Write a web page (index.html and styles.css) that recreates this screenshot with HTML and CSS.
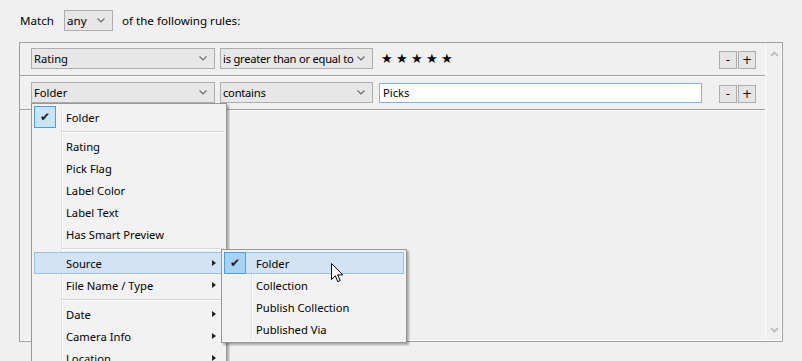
FILE: index.html
```html
<!DOCTYPE html>
<html lang="en">
<head>
    <meta charset="UTF-8">
    <title>Smart Collection Rules</title>
    <link rel="stylesheet" href="styles.css">
</head>
<body>
    <div class="match-line">
        <span class="match-label">Match</span>
        <div class="combo combo-any">
            <span>any</span>
            <svg class="chev" width="8" height="5" viewBox="0 0 8 5"><polyline points="0.5,0.5 4,4 7.5,0.5" fill="none" stroke="#6d6d6d" stroke-width="1.2"/></svg>
        </div>
        <span class="match-rest">of the following rules:</span>
    </div>

    <div class="rules-frame">
        <div class="rules">
            <!-- Rule 1 -->
            <div class="rule">
                <div class="combo combo-field">
                    <span>Rating</span>
                    <svg class="chev" width="8" height="5" viewBox="0 0 8 5"><polyline points="0.5,0.5 4,4 7.5,0.5" fill="none" stroke="#6d6d6d" stroke-width="1.2"/></svg>
                </div>
                <div class="combo combo-op">
                    <span>is greater than or equal to</span>
                    <svg class="chev" width="8" height="5" viewBox="0 0 8 5"><polyline points="0.5,0.5 4,4 7.5,0.5" fill="none" stroke="#6d6d6d" stroke-width="1.2"/></svg>
                </div>
                <div class="stars">
                    <span>★</span><span>★</span><span>★</span><span>★</span><span>★</span>
                </div>
                <div class="rule-btns">
                    <button class="mini-btn">-</button>
                    <button class="mini-btn">+</button>
                </div>
            </div>

            <!-- Rule 2 -->
            <div class="rule">
                <div class="combo combo-field">
                    <span>Folder</span>
                    <svg class="chev" width="8" height="5" viewBox="0 0 8 5"><polyline points="0.5,0.5 4,4 7.5,0.5" fill="none" stroke="#6d6d6d" stroke-width="1.2"/></svg>
                </div>
                <div class="combo combo-op">
                    <span>contains</span>
                    <svg class="chev" width="8" height="5" viewBox="0 0 8 5"><polyline points="0.5,0.5 4,4 7.5,0.5" fill="none" stroke="#6d6d6d" stroke-width="1.2"/></svg>
                </div>
                <div class="text-input">Picks</div>
                <div class="rule-btns">
                    <button class="mini-btn">-</button>
                    <button class="mini-btn">+</button>
                </div>
            </div>
        </div>

        <div class="scrollbar">
            <svg width="9" height="6" viewBox="0 0 9 6"><polyline points="1,5 4.5,1.5 8,5" fill="none" stroke="#c3c3c3" stroke-width="2"/></svg>
            <svg width="9" height="6" viewBox="0 0 9 6"><polyline points="1,1 4.5,4.5 8,1" fill="none" stroke="#c3c3c3" stroke-width="2"/></svg>
        </div>
    </div>

    <!-- Field popup menu (open over rule 2) -->
    <div class="menu menu-fields">
        <div class="menu-item checked"><span class="check">✔</span><span class="label">Folder</span></div>
        <div class="menu-sep"></div>
        <div class="menu-item"><span class="check"></span><span class="label">Rating</span></div>
        <div class="menu-item"><span class="check"></span><span class="label">Pick Flag</span></div>
        <div class="menu-item"><span class="check"></span><span class="label">Label Color</span></div>
        <div class="menu-item"><span class="check"></span><span class="label">Label Text</span></div>
        <div class="menu-item"><span class="check"></span><span class="label">Has Smart Preview</span></div>
        <div class="menu-sep"></div>
        <div class="menu-item hot"><span class="check"></span><span class="label">Source</span><span class="sub-arrow"></span></div>
        <div class="menu-item"><span class="check"></span><span class="label">File Name / Type</span><span class="sub-arrow"></span></div>
        <div class="menu-sep"></div>
        <div class="menu-item"><span class="check"></span><span class="label">Date</span><span class="sub-arrow"></span></div>
        <div class="menu-item"><span class="check"></span><span class="label">Camera Info</span><span class="sub-arrow"></span></div>
        <div class="menu-item"><span class="check"></span><span class="label">Location</span><span class="sub-arrow"></span></div>
    </div>

    <!-- Source submenu -->
    <div class="menu menu-source">
        <div class="menu-item hot checked"><span class="check">✔</span><span class="label">Folder</span></div>
        <div class="menu-item"><span class="check"></span><span class="label">Collection</span></div>
        <div class="menu-item"><span class="check"></span><span class="label">Publish Collection</span></div>
        <div class="menu-item"><span class="check"></span><span class="label">Published Via</span></div>
    </div>

    <svg class="cursor" width="13" height="20" viewBox="0 0 13 20">
        <path d="M0.5,0.5 L0.5,16.5 L4.3,12.8 L6.8,18.6 L9.2,17.6 L6.7,11.9 L11.8,11.9 Z" fill="#fff" stroke="#000" stroke-width="1" stroke-linejoin="miter"/>
    </svg>
</body>
</html>
```

FILE: styles.css
```css
body {
  margin: 0;
  padding: 0;
  width: 802px;
  height: 361px;
  overflow: hidden;
  background: #f0f0f0;
  font-family: "Noto Sans", "Open Sans", sans-serif;
  font-size: 11.2px;
  color: #000;
  position: relative;
}

/* Top line: Match [any] of the following rules */
.match-line {
  display: flex;
  align-items: center;
  padding: 10px 0 0 20px;
  height: 21px;
  font-size: 11.6px;
}
.match-label {
  width: 44px;
}
.match-rest {
  margin-left: 9px;
}

/* Combo boxes */
.combo {
  box-sizing: border-box;
  height: 21px;
  border: 1px solid #adadad;
  background: #e7e7e7;
  display: flex;
  align-items: center;
  justify-content: space-between;
  padding: 0 7px 0 2px;
  white-space: nowrap;
}
.combo .chev {
  flex: none;
}
.combo-any {
  width: 49px;
}
.combo-field {
  width: 184px;
}
.combo-op {
  width: 153px;
  margin-left: 5px;
  letter-spacing: -0.25px;
}

/* Frame holding the rules */
.rules-frame {
  box-sizing: border-box;
  margin: 11px 0 0 19px;
  width: 764px;
  height: 300px;
  border: 1px solid #a0a0a0;
  box-shadow: inset -1px -1px 0 #fff;
  display: flex;
}
.rules {
  flex: 1;
}
.rule {
  display: flex;
  align-items: flex-start;
  padding: 5px 9px 6px 11px;
  border-bottom: 1px solid #a0a0a0;
  box-shadow: 0 1px 0 #fafafa;
}
.rule + .rule {
  padding-top: 6px;
}
.stars {
  margin-left: 8px;
  display: flex;
  font-family: "DejaVu Sans", sans-serif;
  font-size: 13px;
  line-height: 21px;
}
.stars span {
  width: 15px;
}
.text-input {
  box-sizing: border-box;
  margin-left: 6px;
  width: 323px;
  height: 20px;
  margin-top: 1px;
  background: #fff;
  border: 1px solid #7eb4ea;
  padding: 0 3px;
  line-height: 17px;
}
.rule-btns {
  margin-left: auto;
  margin-top: 3px;
  display: flex;
  gap: 1px;
}
.mini-btn {
  box-sizing: border-box;
  width: 18px;
  height: 18px;
  padding: 0;
  border: 1px solid #adadad;
  background: #e5e5e5;
  font-family: "DejaVu Sans", sans-serif;
  font-size: 12px;
  line-height: 14px;
  color: #000;
}

.scrollbar {
  width: 16px;
  border-left: 1px solid #fafafa;
  display: flex;
  flex-direction: column;
  justify-content: space-between;
  align-items: center;
  padding: 8px 0 8px;
}

/* Popup menus */
.menu {
  position: absolute;
  box-sizing: border-box;
  background: #f2f2f2;
  border: 1px solid #979797;
  box-shadow: 2px 2px 2px rgba(0, 0, 0, 0.3);
  padding: 2px;
}
.menu-fields {
  left: 31px;
  top: 103px;
  width: 196px;
  height: 258px;
  border-bottom: 0;
}
.menu-source {
  left: 221px;
  top: 249px;
  width: 186px;
}
.menu::before {
  /* gutter line next to the check column */
  content: "";
  position: absolute;
  top: 2px;
  bottom: 2px;
  left: 29px;
  width: 1px;
  background: #e2e2e2;
  box-shadow: 1px 0 0 #fff;
}
.menu-fields::before {
  bottom: 0;
}
.menu-item {
  position: relative;
  box-sizing: border-box;
  height: 22px;
  display: flex;
  align-items: center;
  border: 1px solid transparent;
}
.menu-item.hot {
  background: #d1e3f4;
  border-color: #94c4ec;
}
.check {
  box-sizing: border-box;
  width: 22px;
  height: 22px;
  margin: -1px 0 0 -1px;
  display: flex;
  align-items: center;
  justify-content: center;
  font-family: "DejaVu Sans", sans-serif;
  font-size: 12px;
  color: #1e1e1e;
}
.menu-item.checked .check {
  background: #c9e5f5;
  border: 1px solid #4aa0e6;
}
.menu-item.hot.checked .check {
  background: #a7d2f0;
}
.label {
  margin-left: 10px;
  white-space: nowrap;
}
.menu-sep {
  height: 7px;
  margin-left: 28px;
  position: relative;
}
.menu-sep::after {
  content: "";
  position: absolute;
  left: 0;
  right: 0;
  top: 3px;
  height: 1px;
  background: #d7d7d7;
  box-shadow: 0 1px 0 #fff;
}
.sub-arrow {
  position: absolute;
  right: 7px;
  top: 7px;
  width: 0;
  height: 0;
  border-top: 3.5px solid transparent;
  border-bottom: 3.5px solid transparent;
  border-left: 4px solid #222;
}

.cursor {
  position: absolute;
  left: 331px;
  top: 263px;
}
```
